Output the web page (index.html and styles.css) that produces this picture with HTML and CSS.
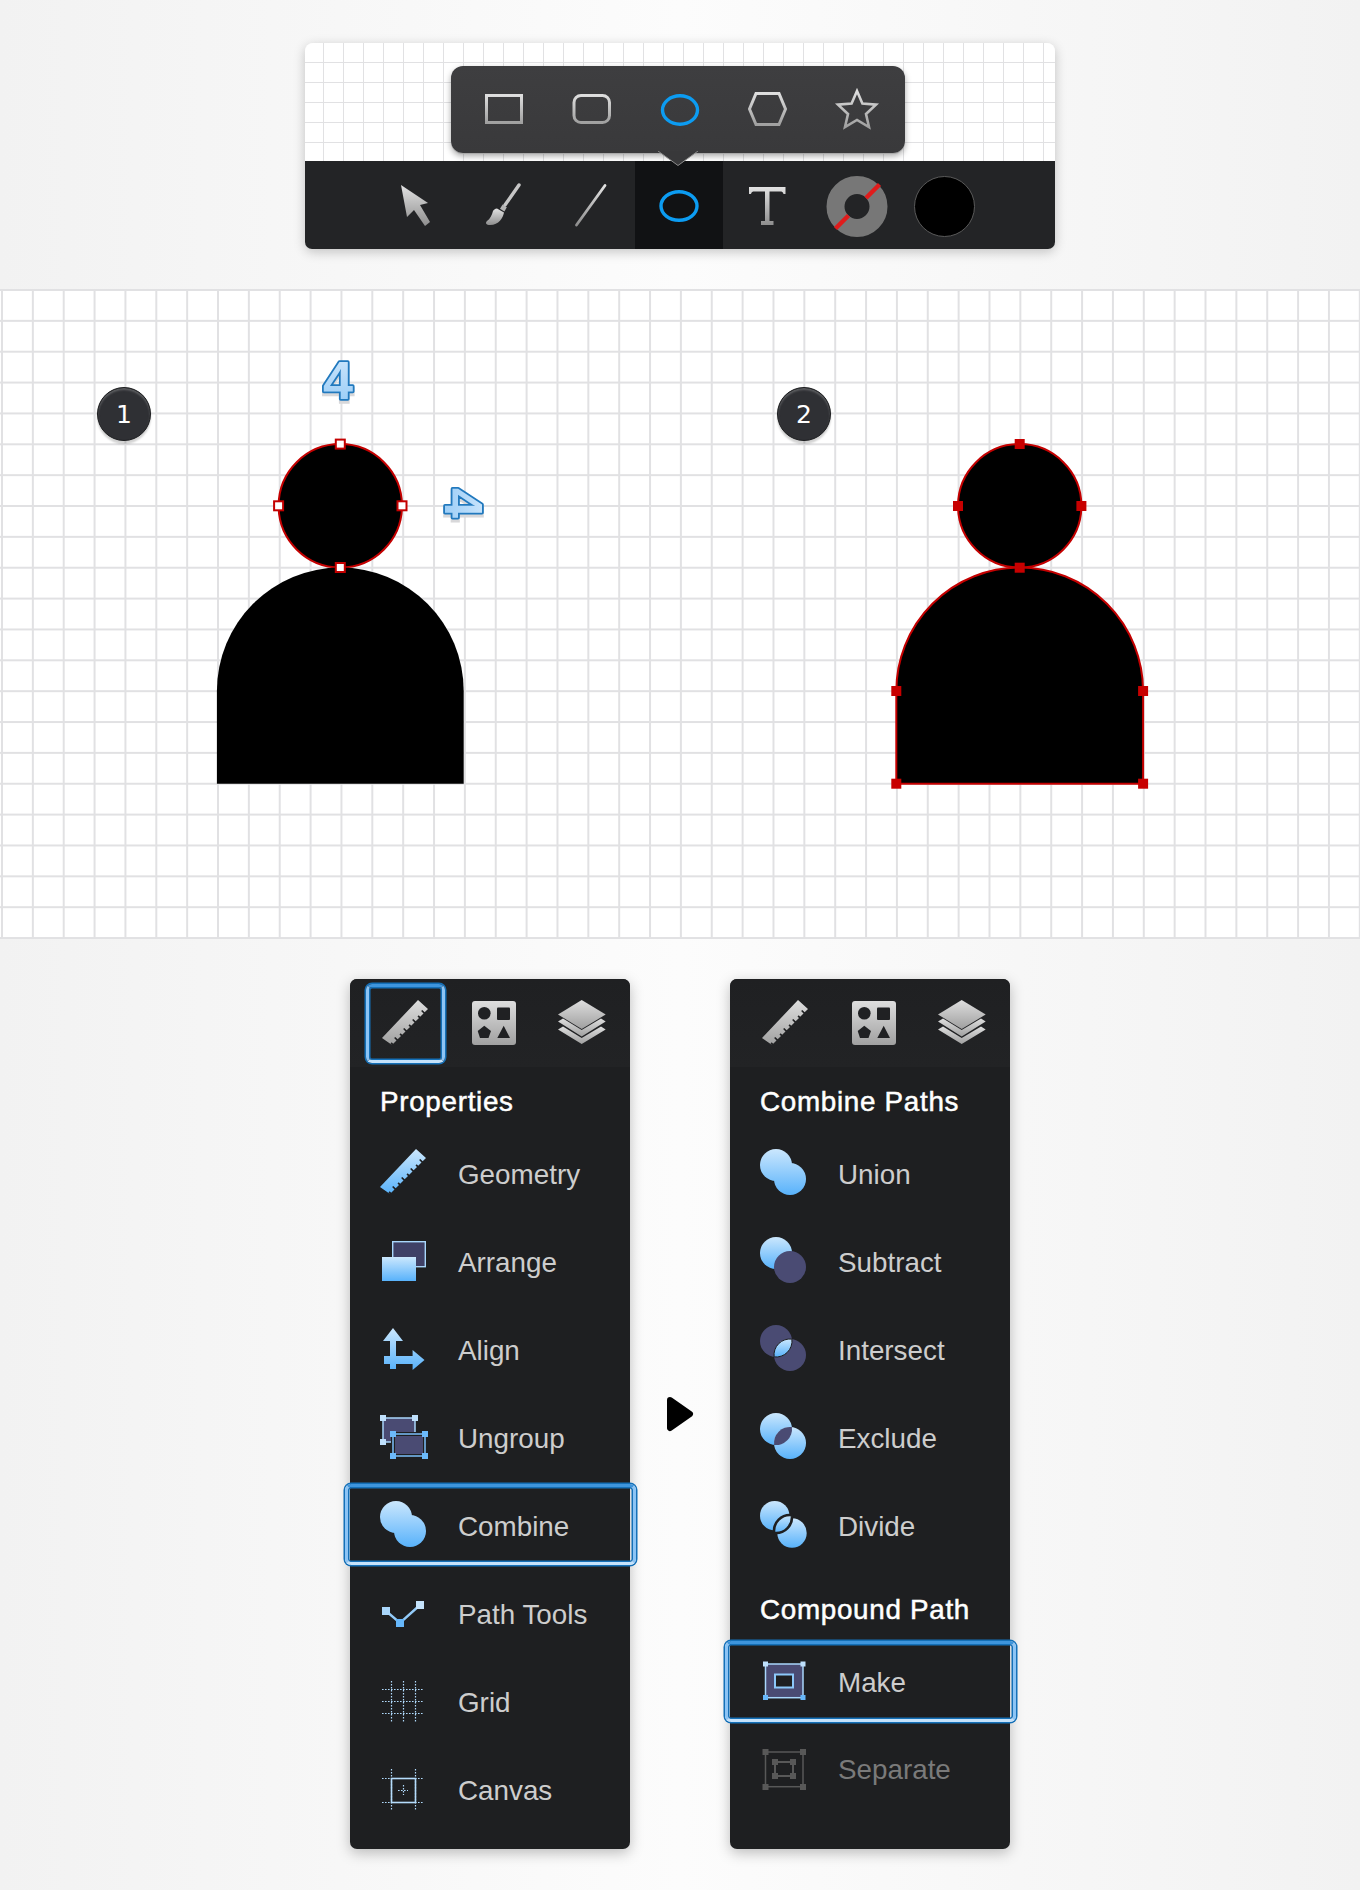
FILE: index.html
```html
<!DOCTYPE html>
<html lang="en">
<head>
    <meta charset="UTF-8">
    <meta name="viewport" content="width=device-width, initial-scale=1.0">
    <title>Shape tools</title>
    <link rel="stylesheet" href="styles.css">
</head>
<body>
    <!-- Shared gradients and icons -->
    <svg class="defs" width="0" height="0">
        <defs>
            <linearGradient id="blue" x1="0" y1="0" x2="0" y2="1"><stop offset="0" stop-color="#cbe7fd"/><stop offset="1" stop-color="#58b2fb"/></linearGradient>
            <linearGradient id="blueSpan" gradientUnits="userSpaceOnUse" x1="0" y1="0" x2="0" y2="46"><stop offset="0" stop-color="#cbe7fd"/><stop offset="1" stop-color="#58b2fb"/></linearGradient>
            <linearGradient id="gray" x1="0" y1="0" x2="0" y2="1"><stop offset="0" stop-color="#dedede"/><stop offset="1" stop-color="#a0a0a0"/></linearGradient>
            <linearGradient id="tool" x1="0" y1="0" x2="0" y2="1"><stop offset="0" stop-color="#e2e2e2"/><stop offset="1" stop-color="#8e8e8e"/></linearGradient>
            <linearGradient id="digit" x1="0" y1="0" x2="0" y2="1"><stop offset="0" stop-color="#d3e9fc"/><stop offset="1" stop-color="#93c9f6"/></linearGradient>
            <path id="ruler" d="M0 38 36 0 46 9 l-3.3 3.3 -2.4 -2.4 -1.2 1.2 2.4 2.4 -3.3 3.3 -1.5 -1.5 -1.2 1.2 1.5 1.5 -3.3 3.3 -2.4 -2.4 -1.2 1.2 2.4 2.4 -3.3 3.3 -1.5 -1.5 -1.2 1.2 1.5 1.5 -3.3 3.3 -2.4 -2.4 -1.2 1.2 2.4 2.4 -3.3 3.3 -1.5 -1.5 -1.2 1.2 1.5 1.5 -3.3 3.3 -2.4 -2.4 -1.2 1.2 2.4 2.4 -3.3 3.3 -1.5 -1.5 -1.2 1.2 1.5 1.5Z"/>
            <g id="shapes">
                <rect width="44" height="44" rx="3" fill="url(#gray)"/>
                <circle cx="12.3" cy="12.3" r="6.3" fill="#202123"/>
                <rect x="25" y="6.5" width="13" height="12.5" rx="1" fill="#202123"/>
                <path d="M12.3 24.8 19 30 16.5 37H8L5.7 30ZM31.7 24.7 38 37H25.3Z" fill="#202123"/>
            </g>
            <g id="layers" fill="url(#gray)">
                <path d="M23.7 0 47.7 14.5 23.7 29 0 14.5Z"/>
                <path d="M0 21.5 5 18.5 23.7 30 43 18.5 47.7 21.5 23.7 36.5Z"/>
                <path d="M0 29.5 5 26.5 23.7 38 43 26.5 47.7 29.5 23.7 44Z"/>
            </g>
            <g id="union" fill="url(#blueSpan)">
                <circle cx="16" cy="16" r="16"/>
                <circle cx="30" cy="30" r="16"/>
            </g>
        </defs>
    </svg>

    <!-- Toolbar with the shape popup -->
    <div class="window">
        <div class="paper"></div>
        <div class="popup">
            <svg class="tool" viewBox="0 0 88 87"><rect x="26.5" y="30.5" width="35" height="27" fill="none" stroke="url(#gray)" stroke-width="3"/></svg>
            <svg class="tool" viewBox="0 0 88 87"><rect x="26" y="30.5" width="35.5" height="27" rx="7" fill="none" stroke="url(#gray)" stroke-width="3"/></svg>
            <svg class="tool" viewBox="0 0 88 87"><ellipse cx="44" cy="45" rx="17.5" ry="14.2" fill="none" stroke="#0c9cf2" stroke-width="3.4"/></svg>
            <svg class="tool" viewBox="0 0 88 87"><path d="M32 28.5H55L61.5 44 55 59.5H32L25.5 44Z" fill="none" stroke="url(#gray)" stroke-width="3"/></svg>
            <svg class="tool" viewBox="0 0 88 87"><path d="M45 26 50.4 38.6 64 39.6 54 49 57 62 45 55 33 62 36 49 26 39.6 39.6 38.6Z" fill="none" stroke="url(#gray)" stroke-width="2.6"/></svg>
            <svg class="popup-tip" viewBox="0 0 40 15"><path d="M0 0 20 14.5 40 0" fill="#38383a" stroke="#8c8c8c" stroke-width="1"/></svg>
        </div>
        <div class="toolbar">
            <svg class="tool" viewBox="0 0 88 88"><path d="M30 24 57 42 49 44 59 61 54 65 43 49 36 56Z" fill="url(#tool)"/></svg>
            <svg class="tool" viewBox="0 0 88 88">
                <path d="M60 24 46 44" fill="none" stroke="#c6c6c6" stroke-width="3.4" stroke-linecap="round"/>
                <path d="M43.6 43.5 47.8 46.2 45.4 50.4 41 47.8Z" fill="#b4b4b4"/>
                <path d="M38 47.5 45 51.5C44 57 40 64 31 64 27 64 26 62 28 60 31 58 33 54 34 50 34.5 49 36 47.5 38 47.5Z" fill="url(#tool)"/>
            </svg>
            <svg class="tool" viewBox="0 0 88 88"><path d="M29.5 64 58 24.5" fill="none" stroke="url(#tool)" stroke-width="2.8" stroke-linecap="round"/></svg>
            <svg class="tool tool-active" viewBox="0 0 88 88"><ellipse cx="44" cy="45" rx="18" ry="14.3" fill="none" stroke="#0c9cf2" stroke-width="3.4"/></svg>
            <svg class="tool" viewBox="0 0 88 88"><path d="M26 26H62.5V33H60.5C60 31 59 30.5 57 30.5H46.5V60H50.5V64H38V60H42V30.5H31.5C29.5 30.5 28.5 31 28 33H26Z" fill="url(#tool)"/></svg>
            <svg class="tool" viewBox="0 0 88 88">
                <circle cx="46" cy="45.5" r="21.5" fill="none" stroke="#777" stroke-width="18"/>
                <path d="M24.5 67.5 37.5 54.5M55 37 68.5 23.5" stroke="#e01c1c" stroke-width="4.4"/>
            </svg>
            <svg class="tool" viewBox="0 0 88 88"><circle cx="45.5" cy="45.5" r="30" fill="#000" stroke="#5a5a5a"/></svg>
        </div>
    </div>

    <!-- Drawing canvas -->
    <div class="canvas">
        <svg class="drawing" width="1360" height="650" viewBox="0 0 1360 650">
            <!-- left figure -->
            <circle cx="340.3" cy="216.8" r="61.7" fill="#000" stroke="#c40000" stroke-width="2"/>
            <path d="M216.9 494.7V402A123.4 123.4 0 0 1 463.7 402V494.7Z" fill="#000"/>
            <g fill="#fff" stroke="#c40000" stroke-width="2">
                <rect x="335.8" y="150.6" width="9" height="9"/>
                <rect x="335.8" y="274" width="9" height="9"/>
                <rect x="274.1" y="212.3" width="9" height="9"/>
                <rect x="397.5" y="212.3" width="9" height="9"/>
            </g>
            <text class="digit-shadow" x="323" y="113">4</text>
            <text class="digit" x="323" y="110" fill="url(#digit)">4</text>
            <text class="digit-shadow" transform="translate(445 202) rotate(90)">4</text>
            <text class="digit" transform="translate(445 199) rotate(90)" fill="url(#digit)">4</text>

            <!-- right figure -->
            <circle cx="1019.7" cy="216.8" r="61.7" fill="#000" stroke="#c40000" stroke-width="2"/>
            <path d="M896.3 494.7V402A123.4 123.4 0 0 1 1143.1 402V494.7Z" fill="#000" stroke="#c40000" stroke-width="2"/>
            <g fill="#c80000">
                <rect x="1014.7" y="150" width="10" height="10"/>
                <rect x="1014.7" y="273.7" width="10" height="10"/>
                <rect x="953" y="212" width="10" height="10"/>
                <rect x="1076.4" y="212" width="10" height="10"/>
                <rect x="891.3" y="397" width="10" height="10"/>
                <rect x="1138.1" y="397" width="10" height="10"/>
                <rect x="891.3" y="489.7" width="10" height="10"/>
                <rect x="1138.1" y="489.7" width="10" height="10"/>
            </g>
        </svg>
        <span class="badge badge-one">1</span>
        <span class="badge badge-two">2</span>
    </div>

    <!-- Side panels -->
    <div class="panels">
        <div class="panel">
            <div class="tabs">
                <div class="tab focused"><svg class="icon" viewBox="0 0 46 46"><use href="#ruler" fill="url(#gray)"/></svg></div>
                <div class="tab"><svg class="icon" viewBox="0 0 46 46"><use href="#shapes" x="2" y="1"/></svg></div>
                <div class="tab"><svg class="icon" viewBox="0 0 46 46"><use href="#layers"/></svg></div>
            </div>
            <h3 class="heading">Properties</h3>
            <div class="row">
                <svg class="icon" viewBox="0 0 46 46"><use href="#ruler" fill="url(#blue)"/></svg>
                <span class="label">Geometry</span>
            </div>
            <div class="row">
                <svg class="icon" viewBox="0 0 46 46">
                    <rect x="12.7" y="4.7" width="32.6" height="25" fill="#3f4066" stroke="#a9d6fb" stroke-width="1.4"/>
                    <rect x="2" y="20" width="34" height="24" fill="url(#blue)"/>
                </svg>
                <span class="label">Arrange</span>
            </div>
            <div class="row">
                <svg class="icon" viewBox="0 0 46 46"><path d="M13 3 23 16H16V31H32.6V25L44.5 35 32.6 45V39H16V44H10V39H4V31H10V16H3Z" fill="url(#blue)"/></svg>
                <span class="label">Align</span>
            </div>
            <div class="row">
                <svg class="icon" viewBox="0 0 46 46">
                    <rect x="3" y="5" width="32" height="24" fill="#4a4b73" stroke="#a9d6fb" stroke-width="1.5"/>
                    <g fill="#bfe0fc"><rect y="2" width="6" height="6"/><rect x="32" y="2" width="6" height="6"/><rect y="26" width="6" height="6"/></g>
                    <rect x="13" y="21" width="32" height="22" fill="#4a4b73" stroke="#1e1f21" stroke-width="4"/>
                    <rect x="13" y="21" width="32" height="22" fill="none" stroke="#7cc0fa" stroke-width="1.5"/>
                    <g fill="#6cb9fb"><rect x="10" y="18" width="6" height="6"/><rect x="42" y="18" width="6" height="6"/><rect x="10" y="40" width="6" height="6"/><rect x="42" y="40" width="6" height="6"/></g>
                </svg>
                <span class="label">Ungroup</span>
            </div>
            <div class="row focused">
                <svg class="icon" viewBox="0 0 46 46"><use href="#union"/></svg>
                <span class="label">Combine</span>
            </div>
            <div class="row">
                <svg class="icon" viewBox="0 0 46 46">
                    <path d="M6 22 20 34 40 16" fill="none" stroke="#93cbf9" stroke-width="2.4"/>
                    <rect x="2" y="18" width="8" height="8" fill="#a9d6fb"/>
                    <rect x="16" y="30" width="8" height="8" fill="#66b7fb"/>
                    <rect x="36" y="12" width="8" height="8" fill="#c5e3fc"/>
                </svg>
                <span class="label">Path Tools</span>
            </div>
            <div class="row">
                <svg class="icon" viewBox="0 0 46 46">
                    <path class="dots" d="M11.5 4V46M23.5 4V46M35.5 4V46M2 12.5H44M2 24.5H44M2 36.5H44"/>
                </svg>
                <span class="label">Grid</span>
            </div>
            <div class="row">
                <svg class="icon" viewBox="0 0 46 46">
                    <path class="dots" d="M11.5 4V46M35.5 4V46M2 13.5H44M2 37.5H44M23.5 20V30M18 25.5H28"/>
                    <rect x="11.5" y="13.5" width="24" height="24" fill="none" stroke="#b5dcfc" stroke-width="1.6"/>
                </svg>
                <span class="label">Canvas</span>
            </div>
        </div>

        <div class="next">
            <svg class="next-arrow" width="28" height="36" viewBox="0 0 28 36"><path d="M4 4 24 18 4 32Z" fill="#000" stroke="#000" stroke-width="6" stroke-linejoin="round"/></svg>
        </div>

        <div class="panel">
            <div class="tabs">
                <div class="tab"><svg class="icon" viewBox="0 0 46 46"><use href="#ruler" fill="url(#gray)"/></svg></div>
                <div class="tab"><svg class="icon" viewBox="0 0 46 46"><use href="#shapes" x="2" y="1"/></svg></div>
                <div class="tab"><svg class="icon" viewBox="0 0 46 46"><use href="#layers"/></svg></div>
            </div>
            <h3 class="heading">Combine Paths</h3>
            <div class="row">
                <svg class="icon" viewBox="0 0 46 46"><use href="#union"/></svg>
                <span class="label">Union</span>
            </div>
            <div class="row">
                <svg class="icon" viewBox="0 0 46 46">
                    <circle cx="16" cy="16" r="16" fill="url(#blue)"/>
                    <circle cx="30" cy="30" r="16" fill="#4a4b73"/>
                </svg>
                <span class="label">Subtract</span>
            </div>
            <div class="row">
                <svg class="icon" viewBox="0 0 46 46">
                    <circle cx="16" cy="16" r="16" fill="#4a4b73"/>
                    <circle cx="30" cy="30" r="16" fill="#4a4b73"/>
                    <path d="M31.9 14.1A16 16 0 0 1 14.1 31.9 16 16 0 0 1 31.9 14.1Z" fill="url(#blue)" stroke="#1e1f21"/>
                </svg>
                <span class="label">Intersect</span>
            </div>
            <div class="row">
                <svg class="icon" viewBox="0 0 46 46">
                    <circle cx="16" cy="16" r="16" fill="url(#blue)"/>
                    <circle cx="30" cy="30" r="16" fill="url(#blue)"/>
                    <path d="M31.9 14.1A16 16 0 0 1 14.1 31.9 16 16 0 0 1 31.9 14.1Z" fill="#4a4b73"/>
                </svg>
                <span class="label">Exclude</span>
            </div>
            <div class="row">
                <svg class="icon" viewBox="0 0 46 46">
                    <circle cx="14.7" cy="14.7" r="14.7" fill="url(#blue)"/>
                    <circle cx="32" cy="32" r="14.7" fill="url(#blue)"/>
                    <path d="M31.9 14.1A16 16 0 0 1 14.1 31.9 16 16 0 0 1 31.9 14.1Z" fill="url(#blue)" stroke="#1e1f21" stroke-width="2.6"/>
                </svg>
                <span class="label">Divide</span>
            </div>
            <h3 class="heading heading-second">Compound Path</h3>
            <div class="row focused">
                <svg class="icon" viewBox="0 0 46 46">
                    <rect x="5.5" y="6" width="37.5" height="33.7" fill="#4a4b73" stroke="#a9d6fb" stroke-width="1.5"/>
                    <rect x="15" y="16.5" width="18" height="13" fill="#1e1f21" stroke="#8cc8fa" stroke-width="2"/>
                    <g fill="#bfe0fc"><rect x="3" y="3.5" width="5" height="5"/><rect x="40.5" y="3.5" width="5" height="5"/></g>
                    <g fill="#66b7fb"><rect x="3" y="37" width="5" height="5"/><rect x="40.5" y="37" width="5" height="5"/></g>
                </svg>
                <span class="label label-make">Make</span>
            </div>
            <div class="row">
                <svg class="icon" viewBox="0 0 46 46">
                    <rect x="5.5" y="6" width="37.5" height="34.7" fill="none" stroke="#585858" stroke-width="1.5"/>
                    <rect x="15" y="16" width="18" height="14" fill="none" stroke="#585858" stroke-width="2"/>
                    <g fill="#585858">
                        <rect x="2.5" y="3" width="6" height="6"/><rect x="40" y="3" width="6" height="6"/><rect x="2.5" y="38" width="6" height="6"/><rect x="40" y="38" width="6" height="6"/>
                        <rect x="12" y="13" width="6" height="6"/><rect x="30" y="13" width="6" height="6"/><rect x="12" y="27" width="6" height="6"/><rect x="30" y="27" width="6" height="6"/>
                    </g>
                </svg>
                <span class="label label-off">Separate</span>
            </div>
        </div>
    </div>
</body>
</html>
```

FILE: styles.css
```css
/* Page */
body {
    margin: 0;
    min-height: 1890px;
    display: flex;
    flex-direction: column;
    align-items: center;
    font-family: "Liberation Sans", Arial, sans-serif;
    background: linear-gradient(90deg, #f2f2f2 0%, #fcfcfc 50%, #f2f2f2 100%);
}
.defs {
    display: block;
    height: 0;
}

/* Top window */
.window {
    position: relative;
    width: 750px;
    margin-top: 43px;
    border-radius: 8px;
    box-shadow: 0 3px 12px rgba(0, 0, 0, 0.22);
}
.paper {
    height: 118px;
    border-radius: 8px 8px 0 0;
    background-color: #fff;
    background-image:
        linear-gradient(#e1e1e3 1.5px, transparent 1.5px),
        linear-gradient(90deg, #e1e1e3 1.5px, transparent 1.5px);
    background-size: 20px 20px;
    background-position: 18px 19px;
}
.toolbar {
    display: flex;
    height: 88px;
    padding-left: 66px;
    border-radius: 0 0 7px 7px;
    background: #232426;
}
.tool {
    display: block;
    width: 88px;
    height: 88px;
}
.tool-active {
    background: #111214;
}
.popup {
    position: absolute;
    z-index: 2;
    top: 23px;
    left: 146px;
    box-sizing: border-box;
    display: flex;
    width: 454px;
    height: 87px;
    padding-left: 9px;
    border-radius: 12px;
    background: linear-gradient(#3e3e40, #39393b);
    box-shadow: 0 1px 0 #a9a9a9, 0 3px 6px rgba(0, 0, 0, 0.35);
}
.popup .tool {
    height: 87px;
    margin-top: -1px;
}
.popup-tip {
    position: absolute;
    top: 85px;
    left: 207px;
    width: 40px;
    height: 15px;
}

/* Canvas with the two figures */
.canvas {
    position: relative;
    width: 1360px;
    height: 650px;
    margin-top: 40px;
    background-color: #fff;
    background-image:
        linear-gradient(#e1e1e3 1.5px, transparent 1.5px),
        linear-gradient(90deg, #e1e1e3 1.5px, transparent 1.5px);
    background-size: 30.86px 30.86px;
    background-position: 1px 0;
}
.drawing {
    display: block;
}
.digit,
.digit-shadow {
    font-family: "Liberation Sans", Arial, sans-serif;
    font-size: 54px;
    font-weight: 700;
}
.digit {
    stroke: #2179be;
    stroke-width: 3.6px;
    stroke-linejoin: round;
    paint-order: stroke;
}
.digit-shadow {
    fill: #d8d8da;
    stroke: #d8d8da;
    stroke-width: 3.6px;
}
.badge {
    position: absolute;
    top: 98px;
    box-sizing: border-box;
    display: flex;
    align-items: center;
    justify-content: center;
    width: 54px;
    height: 54px;
    border: 1px solid #1d1e20;
    border-radius: 50%;
    font-family: "DejaVu Sans", sans-serif;
    font-size: 25px;
    color: #fff;
    background: #2f3034;
    box-shadow: inset 0 2px 2px #5c5d60, 0 3px 2px rgba(0, 0, 0, 0.18);
}
.badge-one {
    left: 97px;
}
.badge-two {
    left: 777px;
}

/* Panels */
.panels {
    display: flex;
    margin-top: 40px;
}
.panel {
    box-sizing: border-box;
    width: 280px;
    height: 870px;
    border-radius: 7px;
    background: #1e1f21;
    box-shadow: 0 4px 14px rgba(0, 0, 0, 0.25);
}
.tabs {
    display: flex;
    height: 88px;
    padding-left: 11px;
    border-radius: 7px 7px 0 0;
    background: linear-gradient(#1f2022, #222325);
}
.tab {
    position: relative;
    display: flex;
    align-items: center;
    justify-content: center;
    width: 88px;
}
.icon {
    display: block;
    flex: none;
    width: 46px;
    height: 46px;
    overflow: visible;
}
.heading {
    box-sizing: border-box;
    height: 61px;
    margin: 0;
    padding: 16px 0 0 30px;
    font-size: 27.8px;
    line-height: 38px;
    font-weight: 400;
    letter-spacing: 0.7px;
    color: #fff;
    -webkit-text-stroke: 0.5px #fff;
}
.heading-second {
    height: 69px;
    padding-top: 23px;
}
.row {
    position: relative;
    display: flex;
    align-items: center;
    gap: 32px;
    height: 88px;
    padding-left: 30px;
}
.label {
    padding-top: 6px;
    font-size: 27.8px;
    color: #cdcdcd;
}
.label-make {
    padding-top: 4px;
}
.label-off {
    padding-top: 2px;
    color: #7a7a7a;
}
.dots {
    fill: none;
    stroke: #b0dafc;
    stroke-width: 1.2;
    stroke-dasharray: 1.6 1.4;
}
/* Blue focus ring on the selected tab or row */
.focused::after {
    content: "";
    position: absolute;
    top: 3.5px;
    bottom: 3.5px;
    left: -5.5px;
    right: -5.5px;
    border: 3px solid;
    border-color: #3e95dd #8cc4f5 #c5e2fb;
    border-radius: 6px;
    box-shadow: 0 0 0 1.5px #1470b8, inset 0 0 0 1.5px #1470b8;
}
.tab.focused::after {
    top: 4.5px;
    bottom: 4.5px;
    left: 4.5px;
    right: 4.5px;
}
.next {
    display: flex;
    align-items: center;
    justify-content: center;
    width: 100px;
}
.next-arrow {
    display: block;
}
```
